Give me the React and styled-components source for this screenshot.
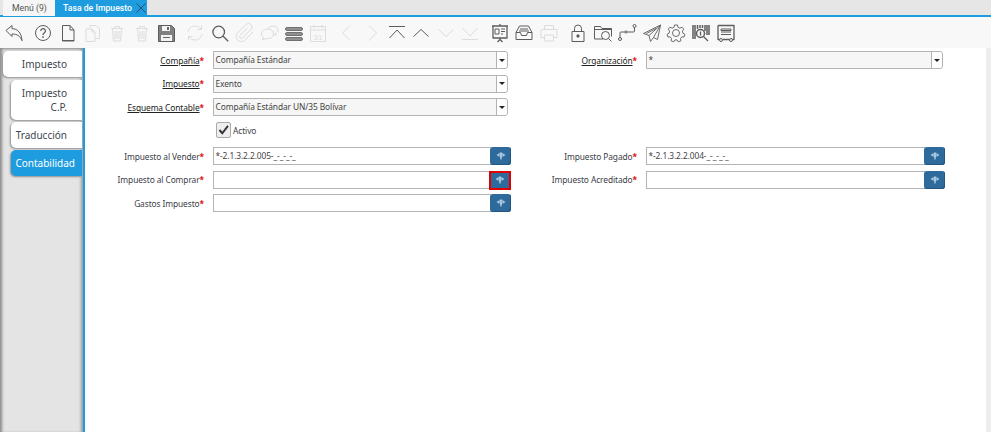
import React from 'react'
import styled, {createGlobalStyle} from 'styled-components'

const GlobalStyle = createGlobalStyle`
    html, body {
        margin: 0;
        padding: 0;
        height: 100%;
        overflow: hidden;
        background: #fff;
    }
    #root {
        height: 100%;
    }
`

const ICONS = {
    undo: <path d="M4 9.500 10 4.500v3.200c5.500 0 9.500 4 10 12-1.700-4.800-5-6.700-10-6.700v2.500z" />,
    help: <>
        <circle cx="12" cy="12" r="7.500" />
        <path d="M9.800 10a2.300 2.300 0 1 1 3.400 2c-.8.5-1.200 1-1.200 2" strokeWidth="1.300" />
        <circle cx="12" cy="16" r=".5" />
    </>,
    page: <path d="M6.500 4.500h7.500l4 4.500v11H6.500zM14 4.500V9h4M6.500 19.500h11.500" />,
    copy: <path d="M10 4.500h6l3.500 3.500v9.500H16M10 4.500v3M6 8h6l3 3v9.500H6zM12 8v3h3" />,
    trash: <path d="M6 7.500h12M9.500 7.500V5.500h5v2M7.500 7.500l1 12.500h7l1-12.500M10 10v8M12 10v8M14 10v8" />,
    refresh: <path d="M5 11c.6-4 3.500-6 7-6 2.500 0 4.500 1 6 3M18.500 4.500V8.500h-4M19 13c-.6 4-3.500 6-7 6-2.500 0-4.500-1-6-3M5.500 19.500v-4h4" />,
    search: <path d="M16.500 11a5.800 5.800 0 1 1-11.600 0 5.800 5.800 0 0 1 11.600 0zM15.200 15.200l5 5" strokeWidth="1.300" />,
    clip: <path d="m20 11-8 8a5 5 0 0 1-7.500-7l8.500-8.500a3.400 3.400 0 0 1 5 5l-8.500 8.300a1.700 1.700 0 0 1-2.500-2.400l7.500-7.400" />,
    chat: <path d="M11 8c-3.500 0-6.500 2-6.500 5 0 1.500.8 2.600 2 3.400L5.500 19l3.500-1.500c3.800.7 7.500-1.300 7.500-4.500S14 8 11 8zM11 8c.8-1.800 3-3 5-3 3 0 5 1.700 5 4 0 1.500-1 2.700-2.500 3.300l.5 2-2.600-1" />,
    calendar: <>
        <path d="M4.500 5.500h15v15h-15zM4.500 9h15M8 4v3M16 4v3" />
        <text x="12" y="18.500" textAnchor="middle" fontSize="8" fontFamily="'Liberation Sans', sans-serif" fill="currentColor" stroke="none">31</text>
    </>,
    left: <path d="M15 4.500 7.500 12l7.500 7.500" />,
    right: <path d="m9 4.500 7.500 7.500L9 19.500" />,
    first: <path d="M4 5.500h16M4.500 17 12 9l7.500 8" />,
    up: <path d="M4.500 15.500 12 8.500l7.500 7" />,
    down: <path d="M4.500 8.500 12 15.500l7.500-7" />,
    last: <path d="M4.500 7 12 15l7.500-8M4 18.500h16" />,
    board: <>
        <path d="M4 5h16M5 5v12h14V5M12 3v2M12 17v1.500M9.500 21l2.500-2.500 2.500 2.500" strokeWidth="1.300" />
        <path d="M7 8h4v5H7zM13 8h4M13 10.500h4M13 13h2" />
    </>,
    inbox: <path d="M7.500 5h9l3.500 6.500v7H4v-7zM4 11.500h4.500l1 3h5l1-3H20M8 8h8M7 10h10" />,
    printer: <path d="M7.500 8.500V4.500h9v4M5 8.500h14a1 1 0 0 1 1 1v7h-3.500M7.500 16.500H4v-7a1 1 0 0 1 1-1M7.500 14h9v6h-9z" />,
    lock: <>
        <path d="M6 10.500h12v10H6zM8.500 10.500V7.500a3.500 3.500 0 0 1 7 0v3" />
        <circle cx="12" cy="15" r="1.200" fill="currentColor" />
    </>,
    folder: <path d="M3.500 18V5.500h6l1.500 2h9.500v8M3.500 18H12M3.500 8.500h17M18.500 14.500a4 4 0 1 1-8 0 4 4 0 0 1 8 0zM17.500 17.500l3 3" />,
    route: <>
        <circle cx="5" cy="18" r="1.500" />
        <circle cx="11" cy="11" r="1.100" />
        <circle cx="19.500" cy="5" r="1.500" />
        <path d="M5 16.500V12a1 1 0 0 1 1-1h3.900M12.100 11H18.500a1 1 0 0 0 1-1V6.500" />
    </>,
    send: <path d="M20.500 4 3.500 12.500 9 14.500l1.500 6 3-4 4 2zM20.500 4 9 14.500M20.500 4l-7 12.500M6.500 12.500 16 7.500" strokeWidth=".9" />,
    gear: <path d="M10.500 4h3l.5 2.300 1.900.9 2.100-1 1.700 2-1.300 1.900.5 2 2 1.200-.8 2.700-2.300-.1-1.300 1.600.4 2.300-2.700 1-1.200-1.900h-2l-1.200 1.900-2.700-1 .4-2.300-1.300-1.600-2.300.1-.8-2.700 2-1.200.5-2-1.300-1.900 1.700-2 2.100 1 1.900-.9zM15.500 12a3.500 3.500 0 1 1-7 0 3.500 3.500 0 0 1 7 0z" strokeWidth=".9" />,
    barcode: <>
        <path d="M4 4v14M6 4v14M8.500 4v4M11 4v3M13.500 4v3M16 4v6M18 4v10M20 4v10" strokeWidth="1.500" />
        <circle cx="11.500" cy="12.500" r="4" fill="#f8f8f8" strokeWidth="1.500" />
        <path d="m14.500 15.500 4.500 4.500M11.500 10.500v4" strokeWidth="1.300" />
    </>,
    certificate: <>
        <path d="M4 4.500h16v14h-1.500M4 4.500v14h1.500M9 18.500h6.500" strokeWidth="1.300" />
        <path d="M7 8h10v1.500H7zM7 11h10M7 13.500h10" />
        <circle cx="7" cy="19" r="1.500" />
        <circle cx="17" cy="19" r="1.500" />
    </>,
}

const TOOLBAR_GROUPS = [
    [{icon: 'undo'}],
    [{icon: 'help'}, {icon: 'page'}, {icon: 'copy', off: true}, {icon: 'trash', off: true}, {icon: 'trash', off: true}, {save: true}],
    [{icon: 'refresh', off: true}, {icon: 'search'}, {icon: 'clip', off: true}, {icon: 'chat', off: true}, {lines: true}, {icon: 'calendar', off: true}],
    [{icon: 'left', off: true}, {icon: 'right', off: true}, {icon: 'first'}, {icon: 'up'}, {icon: 'down', off: true}, {icon: 'last', off: true}],
    [{icon: 'board'}, {icon: 'inbox'}, {icon: 'printer', off: true}],
    [{icon: 'lock'}, {icon: 'folder'}, {icon: 'route'}, {icon: 'send'}, {icon: 'gear'}, {icon: 'barcode'}, {icon: 'certificate'}],
]

const ToolIcon = ({item}) => {
    if (item.save) {
        return (
            <svg viewBox="0 0 24 24" width="24" height="24">
                <path d="M4.500 4.500h13l3 3v13h-16z" fill="#808080" stroke="#5c5c5c" />
                <path d="M8 5h8v5H8zM7 14h11v6H7z" fill="#f4f4f4" />
                <path d="M13 6h2v3h-2zM9 16h7v1H9z" fill="#666" />
            </svg>
        )
    }
    if (item.lines) {
        return (
            <svg viewBox="0 0 24 24" width="24" height="24">
                <path d="M5 6.500h14a1.500 1.500 0 0 1 0 3H5a1.500 1.500 0 0 1 0-3zM5 11.500h14a1.500 1.500 0 0 1 0 3H5a1.500 1.500 0 0 1 0-3zM5 16.500h14a1.500 1.500 0 0 1 0 3H5a1.500 1.500 0 0 1 0-3z" fill="#909090" stroke="#5c5c5c" strokeWidth=".8" />
            </svg>
        )
    }
    return (
        <svg viewBox="0 0 24 24" width="24" height="24" fill="none" stroke="currentColor" strokeWidth="1" strokeLinejoin="round">
            {ICONS[item.icon]}
        </svg>
    )
}

const LookupGlyph = () => (
    <svg viewBox="0 0 10 8" width="10" height="8">
        <path d="M.5 3 3.500 1v4zM9.500 3 6.500 1v4zM3.800.5h2.400v2.500L5.600 7.500H4.400L3.800 3z" fill="#a9c8e0" />
    </svg>
)

const Combo = ({value, wide}) => (
    <ComboBox wide={wide}>
        <ComboText>{value}</ComboText>
        <ComboArrow />
    </ComboBox>
)

const Lookup = ({value, selected}) => (
    <LookupBox>
        <LookupInput>{value}</LookupInput>
        <LookupButton selected={selected}><LookupGlyph /></LookupButton>
    </LookupBox>
)

const Field = ({label, link}) => (
    <Label>
        <LabelText link={link}>{label}</LabelText><Star>*</Star>
    </Label>
)

const App = () => {
    return (
        <Page>
            <GlobalStyle />
            <TabBar>
                <WindowTab>Menú (9)</WindowTab>
                <WindowTab active>
                    Tasa de Impuesto
                    <CloseIcon viewBox="0 0 12 12" fill="none" stroke="#25506e" strokeWidth="1">
                        <path d="m1.500 1.500 9 9M10.500 1.500l-9 9" />
                    </CloseIcon>
                </WindowTab>
            </TabBar>
            <Toolbar>
                {TOOLBAR_GROUPS.map((group, i) => (
                    <ToolGroup key={i}>
                        {group.map((item, j) => (
                            <ToolButton key={j} off={item.off}><ToolIcon item={item} /></ToolButton>
                        ))}
                    </ToolGroup>
                ))}
            </Toolbar>
            <Body>
                <Sidebar>
                    <SideTab first>Impuesto</SideTab>
                    <SideTab tall>Impuesto<br />C.P.</SideTab>
                    <SideTab>Traducción</SideTab>
                    <SideTab active>Contabilidad</SideTab>
                </Sidebar>
                <Main>
                    <Form>
                        <Field label="Compañía" link />
                        <Combo value="Compañía Estándar" />
                        <Field label="Organización" link />
                        <Combo value="*" wide />

                        <Field label="Impuesto" link />
                        <Combo value="Exento" />
                        <span />
                        <span />

                        <Field label="Esquema Contable" link />
                        <Combo value="Compañía Estándar UN/35 Bolívar" />
                        <span />
                        <span />

                        <span />
                        <CheckRow>
                            <CheckBox>
                                <svg viewBox="0 0 16 16" width="16" height="16" fill="none" stroke="#333" strokeWidth="2.400">
                                    <path d="m3 8 3.500 4L13.500 3" />
                                </svg>
                            </CheckBox>
                            Activo
                        </CheckRow>
                        <span />
                        <span />

                        <Field label="Impuesto al Vender" />
                        <Lookup value="*-2.1.3.2.2.005-_-_-_-_" />
                        <Field label="Impuesto Pagado" />
                        <Lookup value="*-2.1.3.2.2.004-_-_-_-_" />

                        <Field label="Impuesto al Comprar" />
                        <Lookup selected />
                        <Field label="Impuesto Acreditado" />
                        <Lookup />

                        <Field label="Gastos Impuesto" />
                        <Lookup />
                        <span />
                        <span />
                    </Form>
                </Main>
                <Scrollbar />
            </Body>
        </Page>
    )
}

const Page = styled.div`
    display: flex;
    flex-direction: column;
    height: 432px;
    overflow: hidden;
    font-family: "Noto Sans", "Open Sans", sans-serif;
`

const TabBar = styled.div`
    display: flex;
    height: 15px;
    padding-left: 3px;
    background: #e6e6e6;
    border-bottom: 2px solid #1e9ce0;
`

const WindowTab = styled.div`
    display: flex;
    align-items: center;
    justify-content: space-between;
    height: 16px;
    padding: ${props => props.active ? "0 0 0 8px" : "0 9px"};
    width: ${props => props.active ? "92px" : "52px"};
    box-sizing: border-box;
    background: ${props => props.active ? "#1e9ce0" : "#f6f6f6"};
    color: ${props => props.active ? "#fff" : "#555"};
    font-family: Roboto, sans-serif;
    font-size: 8.7px;
    font-weight: ${props => props.active ? 500 : 400};
    white-space: nowrap;
`

const CloseIcon = styled.svg`
    flex: none;
    width: 12px;
    height: 12px;
`

const Toolbar = styled.div`
    display: flex;
    gap: 4.6px;
    height: 31px;
    align-items: center;
    padding-left: 1.700px;
    background: #f8f8f8;
`

const ToolGroup = styled.div`
    display: flex;
`

const ToolButton = styled.div`
    display: flex;
    align-items: center;
    justify-content: center;
    width: 24.6px;
    height: 24px;
    color: ${props => props.off ? "#dcdcdc" : "#5c5c5c"};
`

const Body = styled.div`
    flex: 1;
    display: flex;
    min-height: 0;
`

const Sidebar = styled.div`
    display: flex;
    flex-direction: column;
    align-items: flex-end;
    gap: 2px;
    width: 85px;
    box-sizing: border-box;
    padding: 3px 1px 0 0;
    background: #e4e4e4;
    border-right: 2px solid #1e9ce0;
    box-shadow: inset 3px 2px 3px -1px #8a8a8a, inset -3px 0 3px -1px #9a9a9a;
`

const SideTab = styled.div`
    box-sizing: border-box;
    display: flex;
    align-items: center;
    justify-content: flex-end;
    width: ${props => props.first ? "79px" : "71px"};
    height: ${props => props.tall ? "40px" : "26px"};
    margin-bottom: ${props => props.first ? "1px" : "0"};
    padding-right: ${props => props.active ? "7px" : "15px"};
    text-align: right;
    border-radius: 5px 0 0 5px;
    background: ${props => props.active ? "#1e9ce0" : "#fff"};
    color: ${props => props.active ? "#fff" : "#3c4650"};
    font-size: 10px;
    line-height: 14px;
    box-shadow: -1px 1px 2px #8f8f8f;
    white-space: nowrap;
`

const Main = styled.div`
    flex: 1;
    min-width: 0;
    background: #fff;
`

const Form = styled.div`
    display: grid;
    grid-template-columns: 119px 298px 117px 299px;
    grid-template-rows: repeat(3, 18px) 20px repeat(3, 18px);
    column-gap: 9px;
    row-gap: 5.500px;
    padding-top: 3px;
`

const Label = styled.div`
    display: flex;
    align-items: center;
    justify-content: flex-end;
    white-space: nowrap;
    font-size: 8.4px;
    letter-spacing: -0.1px;
    color: #3d4048;
`

const LabelText = styled.span`
    color: ${props => props.link ? "#222" : "#3d4048"};
    text-decoration: ${props => props.link ? "underline" : "none"};
`

const Star = styled.span`
    color: #e01010;
    font-weight: bold;
`

const ComboBox = styled.div`
    display: flex;
    box-sizing: border-box;
    width: ${props => props.wide ? "297px" : "295px"};
    height: 18px;
    background: #f6f6f6;
    border: 1px solid #b4b4b4;
    border-radius: 0 3px 3px 0;
`

const ComboText = styled.div`
    flex: 1;
    padding-left: 1.500px;
    line-height: 16px;
    font-size: 8.4px;
    letter-spacing: -0.1px;
    color: #444;
`

const ComboArrow = styled.div`
    position: relative;
    width: 10px;
    background: #fff;
    border-left: 1px solid #b4b4b4;
    border-radius: 0 3px 3px 0;
    &::after {
        content: "";
        position: absolute;
        left: 2px;
        top: 6.500px;
        border: 3px solid transparent;
        border-top: 3px solid #222;
        border-bottom: 0;
    }
`

const LookupBox = styled.div`
    display: flex;
    align-items: flex-start;
`

const LookupInput = styled.div`
    flex: 1;
    box-sizing: border-box;
    height: 18px;
    padding-left: 1.500px;
    line-height: 15px;
    font-size: 8.4px;
    letter-spacing: -0.1px;
    color: #444;
    background: #fff;
    border: 1px solid #b4b4b4;
    border-right: 0;
`

const LookupButton = styled.div`
    display: flex;
    align-items: center;
    justify-content: center;
    box-sizing: border-box;
    flex: none;
    width: ${props => props.selected ? "22px" : "21px"};
    height: ${props => props.selected ? "19px" : "18px"};
    margin-left: -1px;
    background: #2f6a9c;
    border-radius: ${props => props.selected ? "0" : "3px"};
    border: ${props => props.selected ? "2px solid #e00000" : "0"};
    box-shadow: ${props => props.selected ? "none" : "inset -1px -1px 0 #24557e"};
`

const CheckRow = styled.div`
    display: flex;
    align-items: center;
    gap: 2px;
    height: 17px;
    padding-left: 3px;
    font-size: 8.4px;
    letter-spacing: -0.1px;
    color: #3d4048;
`

const CheckBox = styled.div`
    box-sizing: border-box;
    display: flex;
    align-items: center;
    justify-content: center;
    width: 15px;
    height: 16px;
    background: #eee;
    border: 1px solid #aaa;
    border-radius: 2px;
`

const Scrollbar = styled.div`
    width: 5px;
    background: #eeeeee;
`

export default App
